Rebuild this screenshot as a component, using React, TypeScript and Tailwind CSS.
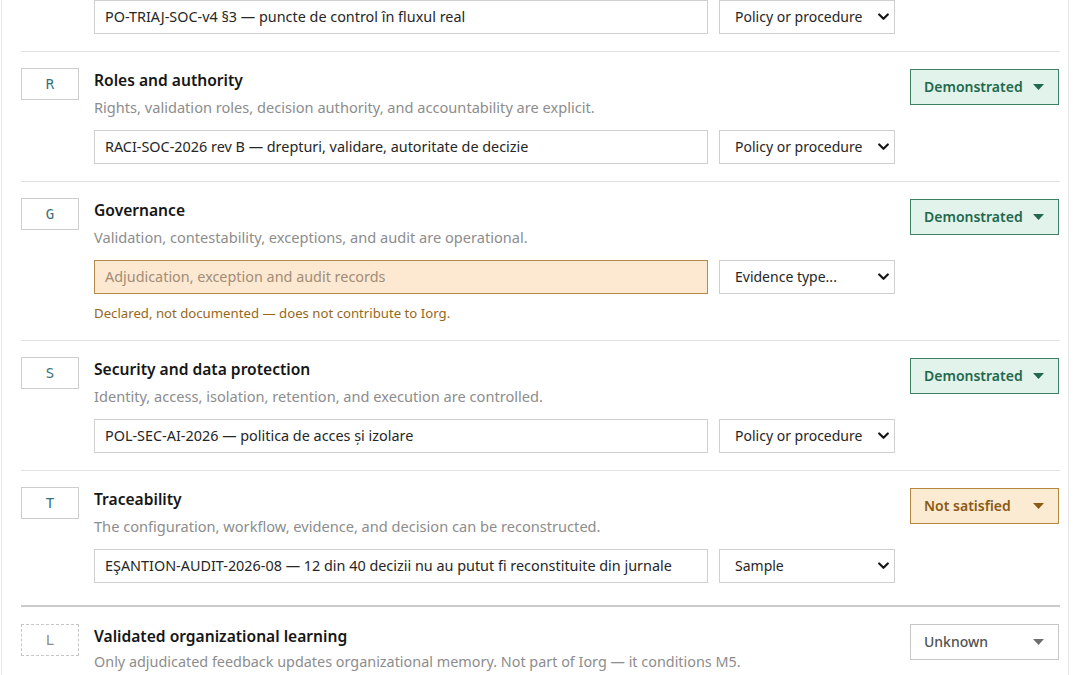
import React from "react";

type Status = "demonstrated" | "not" | "unknown";

type Criterion = {
  code: string;
  title: string;
  description: string;
  evidence?: string;
  placeholder?: string;
  evidenceType: string;
  status: Status;
  warning?: string;
};

const criteria: Criterion[] = [
  {
    code: "R",
    title: "Roles and authority",
    description: "Rights, validation roles, decision authority, and accountability are explicit.",
    evidence: "RACI-SOC-2026 rev B — drepturi, validare, autoritate de decizie",
    evidenceType: "Policy or procedure",
    status: "demonstrated",
  },
  {
    code: "G",
    title: "Governance",
    description: "Validation, contestability, exceptions, and audit are operational.",
    placeholder: "Adjudication, exception and audit records",
    evidenceType: "Evidence type...",
    status: "demonstrated",
    warning: "Declared, not documented — does not contribute to Iorg.",
  },
  {
    code: "S",
    title: "Security and data protection",
    description: "Identity, access, isolation, retention, and execution are controlled.",
    evidence: "POL-SEC-AI-2026 — politica de acces și izolare",
    evidenceType: "Policy or procedure",
    status: "demonstrated",
  },
  {
    code: "T",
    title: "Traceability",
    description: "The configuration, workflow, evidence, and decision can be reconstructed.",
    evidence: "EŞANTION-AUDIT-2026-08 — 12 din 40 decizii nu au putut fi reconstituite din jurnale",
    evidenceType: "Sample",
    status: "not",
  },
];

const statusStyles: Record<Status, { label: string; box: string; caret: string }> = {
  demonstrated: {
    label: "Demonstrated",
    box: "bg-[#e2f3ec] border-[#3d8064] text-[#23684c] font-semibold",
    caret: "#23684c",
  },
  not: {
    label: "Not satisfied",
    box: "bg-[#fcebd3] border-[#b3873f] text-[#8a5a16] font-semibold",
    caret: "#8a5a16",
  },
  unknown: {
    label: "Unknown",
    box: "bg-white border-[#c6c6c6] text-[#525252] font-medium",
    caret: "#6f6f6f",
  },
};

function Chevron() {
  return (
    <svg width="11" height="8" viewBox="0 0 11 8" fill="none">
      <polyline points="1.2,1.5 5.5,5.8 9.8,1.5" stroke="#161616" strokeWidth="2.2" strokeLinecap="round" strokeLinejoin="round" />
    </svg>
  );
}

function Caret({ color }: { color: string }) {
  return (
    <svg width="11" height="6" viewBox="0 0 11 6">
      <polygon points="0,0 11,0 5.5,6" fill={color} />
    </svg>
  );
}

function StatusButton({ status }: { status: Status }) {
  const s = statusStyles[status];
  return (
    <button className={`flex h-9 w-[149px] items-center justify-between border pl-[13px] pr-[14px] text-sm ${s.box}`}>
      <span>{s.label}</span>
      <Caret color={s.caret} />
    </button>
  );
}

function EvidenceRow({ c }: { c: Pick<Criterion, "evidence" | "placeholder" | "evidenceType" | "warning"> }) {
  const warn = !!c.warning;
  return (
    <div className="flex gap-[11px]">
      <div
        className={`flex h-[34px] flex-1 items-center border px-[10px] text-[14.4px] ${
          warn ? "border-[#b38a4a] bg-[#fde9d2] text-[#a38c76]" : "border-[#cfcfcf] bg-white text-[#262626]"
        }`}
      >
        {c.evidence ?? c.placeholder}
      </div>
      <div className="flex h-[34px] w-[176px] items-center justify-between border border-[#cfcfcf] bg-white pl-[15px] pr-[5px] text-sm text-[#262626]">
        <span>{c.evidenceType}</span>
        <Chevron />
      </div>
    </div>
  );
}

function CriterionRow({ c, last }: { c: Criterion; last?: boolean }) {
  return (
    <div className={`flex items-start pt-4 ${last ? "pb-[22px]" : "border-b border-[#e0e0e0] pb-[17px]"}`}>
      <div className="flex h-8 w-[58px] shrink-0 items-center justify-center border border-[#cdcdcd] font-['DejaVu_Sans_Mono',monospace] text-sm text-[#3a6f7a]">
        {c.code}
      </div>
      <div className="ml-[15px] w-[801px] shrink-0">
        <h3 className="text-[15.6px] font-semibold leading-6 text-[#161616]">{c.title}</h3>
        <p className="mt-[5px] text-[14.6px] leading-5 text-[#8d8d8d]">{c.description}</p>
        <div className="mt-[13px]">
          <EvidenceRow c={c} />
        </div>
        {c.warning && <p className="mt-[9px] text-[13.2px] leading-5 text-[#98671a]">{c.warning}</p>}
      </div>
      <div className="ml-[15px] shrink-0 pt-px">
        <StatusButton status={c.status} />
      </div>
    </div>
  );
}

export default function App() {
  return (
    <div className="h-[675px] w-full overflow-hidden bg-white font-['Noto_Sans',sans-serif]">
      <div className="ml-px h-full w-[1068px] border-x border-[#e6e6e6] pl-[19px] pr-[8px]">
        {/* tail of the criterion above, scrolled past */}
        <div className="border-b border-[#e0e0e0] pb-[17px]">
          <div className="ml-[73px] w-[801px]">
            <EvidenceRow
              c={{
                evidence: "PO-TRIAJ-SOC-v4 §3 — puncte de control în fluxul real",
                evidenceType: "Policy or procedure",
              }}
            />
          </div>
        </div>

        {criteria.map((c, i) => (
          <CriterionRow key={c.code} c={c} last={i === criteria.length - 1} />
        ))}

        <div className="h-[2px] bg-[#cbcbcb]" />

        {/* outside the Iorg score */}
        <div className="flex items-start pt-[17px]">
          <div className="flex h-8 w-[58px] shrink-0 items-center justify-center border border-dashed border-[#c6c6c6] font-['DejaVu_Sans_Mono',monospace] text-sm text-[#8d8d8d]">
            L
          </div>
          <div className="ml-[15px] w-[801px] shrink-0">
            <h3 className="text-[15.6px] font-semibold leading-6 text-[#161616]">Validated organizational learning</h3>
            <p className="mt-1 text-[14.4px] leading-5 text-[#8d8d8d]">
              Only adjudicated feedback updates organizational memory. Not part of Iorg — it conditions M5.
            </p>
          </div>
          <div className="ml-[15px] shrink-0">
            <StatusButton status="unknown" />
          </div>
        </div>
      </div>
    </div>
  );
}
